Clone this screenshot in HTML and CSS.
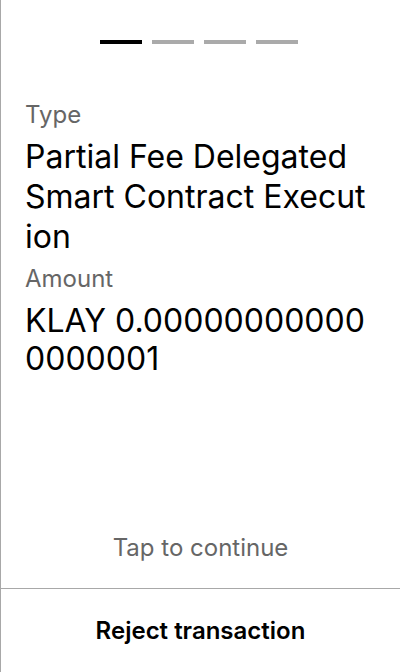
FILE: index.html
```html
<!DOCTYPE html>
<html>
<head>
<meta charset="utf-8">
<link rel="stylesheet" href="styles.css">
</head>
<body>
<div class="screen">
  <div class="steps">
    <span class="step active"></span>
    <span class="step"></span>
    <span class="step"></span>
    <span class="step"></span>
  </div>
  <div class="content">
    <div class="label">Type</div>
    <div class="value title">Partial Fee Delegated<br>Smart Contract Execut<br>ion</div>
    <div class="label amount-label">Amount</div>
    <div class="value amount">KLAY 0.000000000000000001</div>
  </div>
  <div class="tap">Tap to continue</div>
  <div class="reject">Reject transaction</div>
</div>
</body>
</html>
```
FILE: styles.css
```css
html, body {
  margin: 0;
  padding: 0;
  background: #fff;
}
.screen {
  box-sizing: border-box;
  width: 400px;
  height: 672px;
  border-left: 1px solid #a8a8a8;
  display: flex;
  flex-direction: column;
  font-family: Inter, "Noto Sans", sans-serif;
  color: #000;
}
.steps {
  display: flex;
  justify-content: center;
  gap: 10px;
  padding-top: 40px;
  padding-right: 3px;
}
.step {
  width: 42px;
  height: 4px;
  background: #aaaaaa;
}
.step.active {
  background: #000;
}
.content {
  padding: 57px 24px 0 24px;
  flex: 1;
}
.label {
  font-size: 24px;
  line-height: 28px;
  color: #666;
}
.value {
  font-size: 32px;
  line-height: 40px;
  white-space: nowrap;
}
.title {
  margin-top: 8px;
}
.amount-label {
  margin-top: 8px;
}
.amount {
  line-height: 38px;
  margin-top: 9px;
  white-space: normal;
  word-break: break-all;
}
.tap {
  text-align: center;
  font-size: 24px;
  line-height: 28px;
  color: #666;
  padding-bottom: 26px;
}
.reject {
  border-top: 1px solid #a8a8a8;
  height: 83px;
  display: flex;
  align-items: center;
  justify-content: center;
  font-size: 24px;
  font-weight: 600;
}
```
